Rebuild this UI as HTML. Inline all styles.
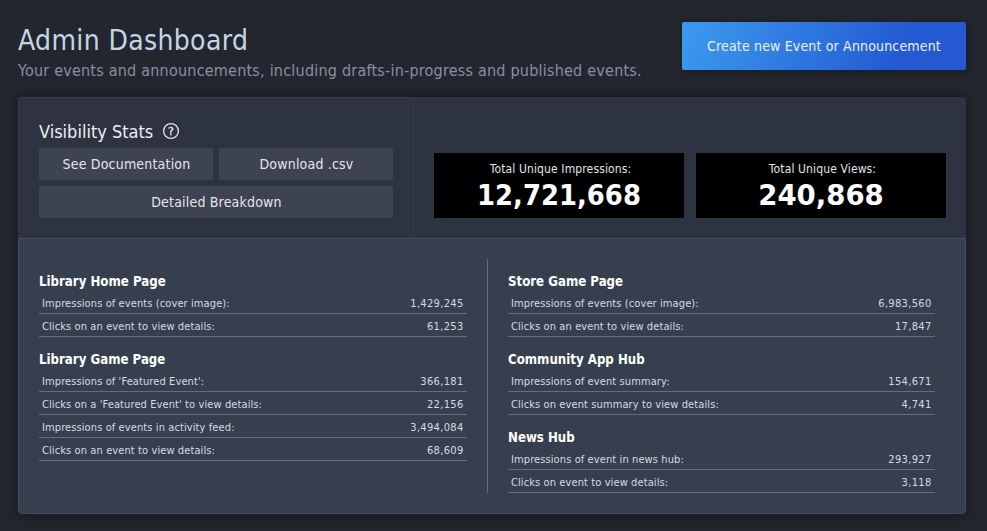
<!DOCTYPE html>
<html lang="en">
<head>
<meta charset="utf-8">
<title>Admin Dashboard</title>
<style>
*{box-sizing:border-box;margin:0;padding:0}
html,body{width:987px;height:531px;overflow:hidden}
body{background:#23262e;font-family:"DejaVu Sans Condensed","DejaVu Sans","Liberation Sans",sans-serif;font-stretch:condensed;color:#dcdedf;position:relative}
.abs{position:absolute;white-space:nowrap}
.title{left:18px;top:21px;font-size:28px;line-height:40px;color:#c3d6e6;letter-spacing:.36px}
.sub{left:18px;top:59px;font-size:16px;line-height:24px;color:#8391a3;letter-spacing:.215px}
.create{left:682px;top:22px;width:284px;height:48px;border-radius:2px;background:linear-gradient(112deg,#3c9bee 0%,#2f78e0 41%,#2459d2 77%,#2459d2 100%);color:#ecf1fa;font-size:14px;line-height:48px;text-align:center;letter-spacing:.16px;box-shadow:1px 1px 9px rgba(0,0,0,.36)}
.panel{left:18px;top:97px;width:948px;height:417px;border-radius:4px;background:#2d3340;box-shadow:0 0 13px 1px rgba(0,0,0,.38)}
.left{left:0;top:0;width:396px;height:142px;border:1px solid #343b49;border-radius:4px 4px 0 0;border-bottom:none}
.bottom{left:0;top:141px;width:948px;height:276px;background:#363f4e;border:1px solid #434d5f;border-radius:0 0 4px 4px}
.vs{left:21px;top:23px;font-size:18px;line-height:24px;color:#eceff2;letter-spacing:0}
.q{position:absolute;left:144px;top:25px;width:18px;height:18px;will-change:transform}
.btn{height:32px;background:#3d4351;border-radius:2px;color:#e4e7ea;font-size:14px;line-height:32px;text-align:center;letter-spacing:.19px;padding-left:1px}
.box{top:56px;width:250px;height:65px;background:#000;text-align:center;color:#fff}
.box .l{font-size:12px;line-height:16px;margin-top:8px;color:#e1e4e8;letter-spacing:.13px;padding-left:3px}
.box .n{font-family:'DejaVu Sans',sans-serif;font-stretch:normal;font-size:28px;line-height:34px;font-weight:700;margin-top:2px}
.col{top:162px;width:428px}
.col h3{font-size:14px;font-weight:700;color:#fff;line-height:20px;height:32px;padding-top:12px;transform:scaleX(.938);transform-origin:0 0}
.row{height:23px;border-bottom:1px solid #636d7d;font-size:11px;line-height:26px;color:#d6dbe2;display:flex;justify-content:space-between;padding:0 3.8px 0 3px;letter-spacing:.1px}
.row span+span{letter-spacing:.32px;margin-right:-.32px}
.rc{width:427px}.rc h3{margin-left:-.4px}
.divider{left:469px;top:162px;width:1px;height:234px;background:#636d7d}
</style>
</head>
<body>
<div class="abs title">Admin Dashboard</div>
<div class="abs sub">Your events and announcements, including drafts-in-progress and published events.</div>
<div class="abs create">Create new Event or Announcement</div>
<div class="abs panel">
  <div class="abs left"></div>
  <div class="abs vs">Visibility Stats</div>
  <svg class="q" viewBox="0 0 18 18"><circle cx="9" cy="9" r="7.4" fill="none" stroke="#dfe2e6" stroke-width="1.35"/><text x="9.1" y="12.9" transform="translate(9 0) scale(1.08 1) translate(-9 0)" text-anchor="middle" font-family="DejaVu Sans, sans-serif" font-stretch="normal" font-size="10.5" font-weight="400" fill="#e6e9ec" stroke="#e6e9ec" stroke-width=".35" opacity=".99">?</text></svg>
  <div class="abs btn" style="left:21px;top:51px;width:174px">See Documentation</div>
  <div class="abs btn" style="left:201px;top:51px;width:174px">Download .csv</div>
  <div class="abs btn" style="left:21px;top:89px;width:354px">Detailed Breakdown</div>
  <div class="abs box" style="left:416px"><div class="l">Total Unique Impressions:</div><div class="n" style="transform:scaleX(.925)">12,721,668</div></div>
  <div class="abs box" style="left:678px"><div class="l">Total Unique Views:</div><div class="n" style="transform:scaleX(.985)">240,868</div></div>
  <div class="abs bottom"></div>
  <div class="abs col" style="left:21px">
    <h3>Library Home Page</h3>
    <div class="row"><span>Impressions of events (cover image):</span><span>1,429,245</span></div>
    <div class="row"><span>Clicks on an event to view details:</span><span>61,253</span></div>
    <h3>Library Game Page</h3>
    <div class="row"><span>Impressions of 'Featured Event':</span><span>366,181</span></div>
    <div class="row"><span>Clicks on a 'Featured Event' to view details:</span><span>22,156</span></div>
    <div class="row"><span>Impressions of events in activity feed:</span><span>3,494,084</span></div>
    <div class="row"><span>Clicks on an event to view details:</span><span>68,609</span></div>
  </div>
  <div class="abs divider"></div>
  <div class="abs col rc" style="left:490px">
    <h3>Store Game Page</h3>
    <div class="row"><span>Impressions of events (cover image):</span><span>6,983,560</span></div>
    <div class="row"><span>Clicks on an event to view details:</span><span>17,847</span></div>
    <h3>Community App Hub</h3>
    <div class="row"><span>Impressions of event summary:</span><span>154,671</span></div>
    <div class="row"><span>Clicks on event summary to view details:</span><span>4,741</span></div>
    <h3>News Hub</h3>
    <div class="row"><span>Impressions of event in news hub:</span><span>293,927</span></div>
    <div class="row"><span>Clicks on event to view details:</span><span>3,118</span></div>
  </div>
</div>
</body>
</html>
